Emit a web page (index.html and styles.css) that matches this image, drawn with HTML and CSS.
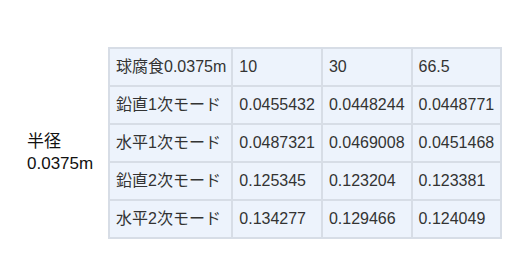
FILE: index.html
```html
<!DOCTYPE html>
<html lang="ja">
<head>
<meta charset="utf-8">
<link rel="stylesheet" href="styles.css">
</head>
<body>
<div class="wrap">
  <div class="label">半径<br>0.0375m</div>
  <table class="data">
    <tr><td>球腐食0.0375m</td><td>10</td><td>30</td><td>66.5</td></tr>
    <tr><td>鉛直1次モード</td><td>0.0455432</td><td>0.0448244</td><td>0.0448771</td></tr>
    <tr><td>水平1次モード</td><td>0.0487321</td><td>0.0469008</td><td>0.0451468</td></tr>
    <tr><td>鉛直2次モード</td><td>0.125345</td><td>0.123204</td><td>0.123381</td></tr>
    <tr><td>水平2次モード</td><td>0.134277</td><td>0.129466</td><td>0.124049</td></tr>
  </table>
</div>
</body>
</html>
```
FILE: styles.css
```css
html, body {
  margin: 0;
  padding: 0;
  background: #ffffff;
}
body {
  font-family: "Liberation Sans", Arial, "Noto Sans CJK JP", sans-serif;
}
.wrap {
  display: flex;
  align-items: center;
  padding: 47px 0 0 27px;
}
.label {
  font-size: 17px;
  line-height: 22px;
  color: #111;
  width: 81px;
  margin-top: 20px;
}
.data {
  border-collapse: collapse;
  font-size: 16px;
  color: #333;
}
.data td {
  border: 2px solid #d7dde6;
  background: #edf3fc;
  padding: 8px 6px;
  line-height: 20px;
  white-space: nowrap;
}
.data td:first-child {
  padding-right: 5px;
}
```
